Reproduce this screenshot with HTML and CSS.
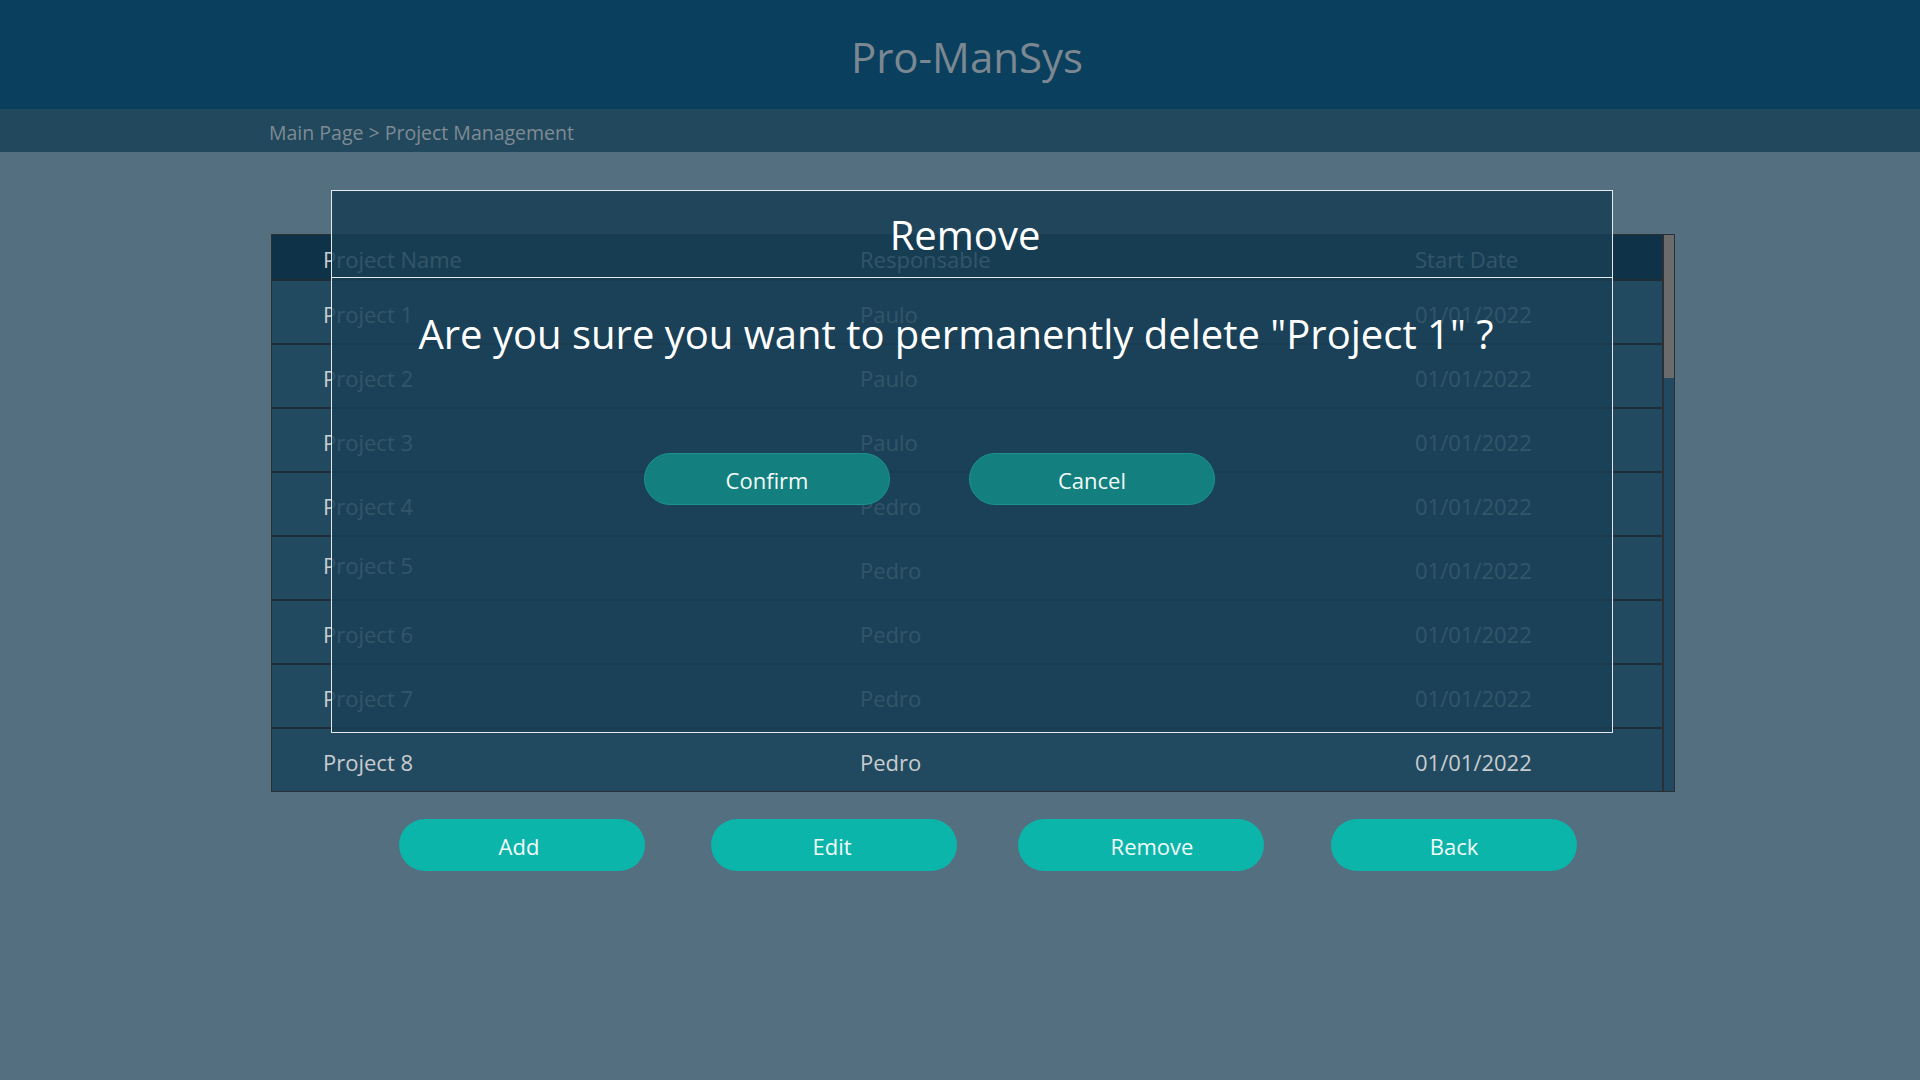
FILE: index.html
```html
<!DOCTYPE html>
<html lang="en">
<head>
<meta charset="utf-8">
<title>Pro-ManSys</title>
<link rel="stylesheet" href="styles.css">
</head>
<body>
<header class="app-header">
  <h1 class="app-title">Pro-ManSys</h1>
</header>
<nav class="breadcrumb">Main Page &gt; Project Management</nav>
<main class="content">
  <div class="table">
    <div class="grid">
      <div class="row head"><span>Project Name</span><span>Responsable</span><span>Start Date</span></div>
      <div class="row"><span>Project 1</span><span>Paulo</span><span>01/01/2022</span></div>
      <div class="row"><span>Project 2</span><span>Paulo</span><span>01/01/2022</span></div>
      <div class="row"><span>Project 3</span><span>Paulo</span><span>01/01/2022</span></div>
      <div class="row"><span>Project 4</span><span>Pedro</span><span>01/01/2022</span></div>
      <div class="row"><span class="raised">Project 5</span><span>Pedro</span><span>01/01/2022</span></div>
      <div class="row"><span>Project 6</span><span>Pedro</span><span>01/01/2022</span></div>
      <div class="row"><span>Project 7</span><span>Pedro</span><span>01/01/2022</span></div>
      <div class="row"><span>Project 8</span><span>Pedro</span><span>01/01/2022</span></div>
    </div>
    <div class="scrollbar"><div class="thumb"></div></div>
  </div>
  <div class="actions">
    <button class="btn btn-add">Add</button>
    <button class="btn btn-edit">Edit</button>
    <button class="btn btn-remove">Remove</button>
    <button class="btn btn-back">Back</button>
  </div>
</main>
<div class="dialog">
  <div class="dialog-header">Remove</div>
  <p class="dialog-message">Are you sure you want to permanently delete "Project 1" ?</p>
  <div class="dialog-actions">
    <button class="dbtn">Confirm</button>
    <button class="dbtn">Cancel</button>
  </div>
</div>
</body>
</html>
```
FILE: styles.css
```css
* { box-sizing: border-box; }
html, body { margin: 0; padding: 0; }
body {
  width: 1920px;
  height: 1080px;
  background: #546f80;
  font-family: "Open Sans", "Noto Sans", sans-serif;
  position: relative;
  overflow: hidden;
}
.app-header {
  height: 109px;
  background: #0a3f5e;
  padding: 28px 0 0 14px;
}
.app-title {
  margin: 0;
  text-align: center;
  font-weight: 400;
  font-size: 42px;
  line-height: 57px;
  color: #7b8892;
}
.breadcrumb {
  height: 43px;
  background: #21485c;
  padding: 10px 0 0 269px;
  font-size: 19.5px;
  line-height: 27px;
  color: #7f8b94;
}
.content {
  padding: 82px 0 0 271px;
}
.table {
  display: flex;
  width: 1404px;
  border: 1px solid #2a3036;
}
.grid {
  width: 1390px;
  background: #214a60;
}
.row {
  display: grid;
  grid-template-columns: 537px 555px 1fr;
  padding-left: 51px;
  height: 64px;
  border-top: 2px solid #1d2c35;
  font-size: 22px;
  line-height: 30px;
  color: #c9cccf;
}
.row span { padding-top: 17.5px; }
.row span.raised { padding-top: 12.5px; }
.row.head {
  height: 44px;
  border-top: 0;
  background: #0e3248;
}
.row.head span { padding-top: 8.5px; }
.scrollbar {
  width: 12px;
  border-left: 2px solid #2a3036;
  background: #22495f;
}
.thumb {
  height: 143px;
  background: #6b6b6b;
}
.actions {
  display: flex;
  margin-top: 27px;
  padding-left: 128px;
}
.btn {
  width: 246px;
  height: 52px;
  border: 0;
  border-radius: 26px;
  background: #0bb5a9;
  color: #f2fbfa;
  font-family: inherit;
  font-size: 22px;
  padding: 2px 0 0;
}
.btn-add { padding-right: 6px; }
.btn-edit { margin-left: 66px; padding-right: 4px; }
.btn-remove { margin-left: 61px; padding-left: 22px; }
.btn-back { margin-left: 67px; }
.dialog {
  position: absolute;
  left: 331px;
  top: 190px;
  width: 1282px;
  height: 543px;
  border: 1px solid #e6eaec;
  background: rgba(25, 64, 86, 0.85);
}
.dialog-header {
  height: 87px;
  border-bottom: 1px solid #e6eaec;
  padding: 17px 14px 0 0;
  text-align: center;
  font-size: 40px;
  line-height: 54px;
  color: #ffffff;
}
.dialog-message {
  margin: 29px 0 0;
  padding-right: 32px;
  text-align: center;
  font-size: 40px;
  line-height: 54px;
  color: #ffffff;
}
.dialog-actions {
  display: flex;
  gap: 79px;
  margin-top: 92px;
  padding-left: 312px;
}
.dbtn {
  width: 246px;
  height: 52px;
  border: 1px solid #1a9290;
  border-radius: 26px;
  background: #137f7e;
  color: #f2fbfa;
  font-family: inherit;
  font-size: 22px;
  padding: 2px 0 0;
}
```
